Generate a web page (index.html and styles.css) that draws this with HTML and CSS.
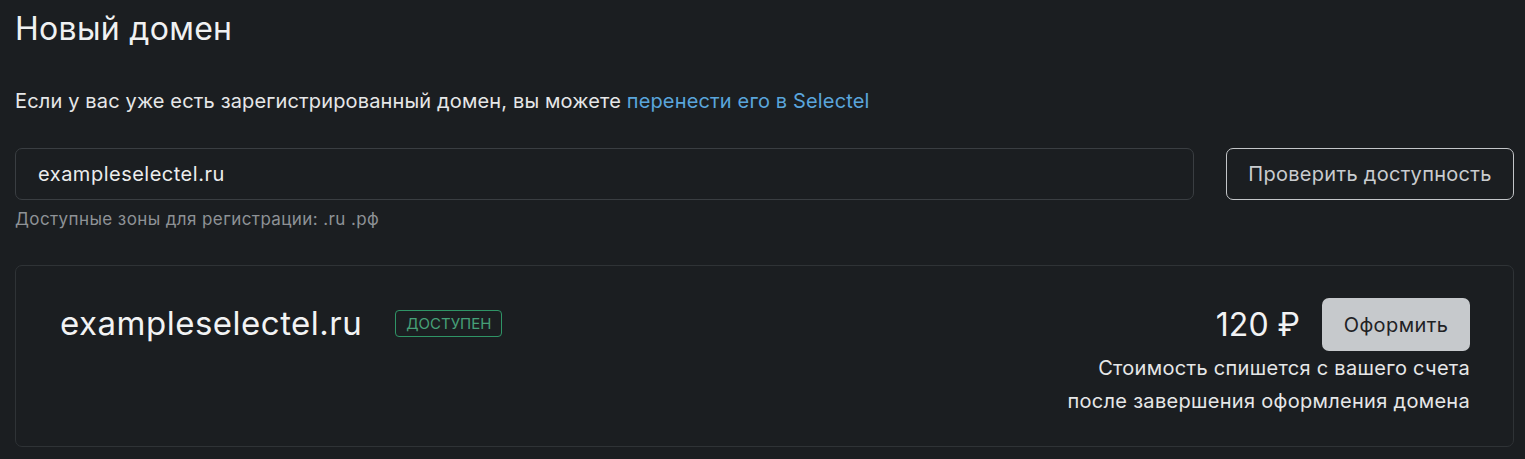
FILE: index.html
```html
<!DOCTYPE html>
<html lang="ru">
  <head>
    <meta charset="UTF-8" />
    <meta name="viewport" content="width=device-width, initial-scale=1.0" />
    <title>Новый домен</title>
    <link rel="stylesheet" href="styles.css">
  </head>
  <body>
    <div class="page">
      <h1>Новый домен</h1>
      <p class="lead">
        Если у вас уже есть зарегистрированный домен, вы можете
        <a href="#">перенести его в Selectel</a>
      </p>

      <form class="search">
        <div class="field">
          <input type="text" value="exampleselectel.ru" />
          <div class="hint">Доступные зоны для регистрации: .ru .рф</div>
        </div>
        <button type="button" class="check">Проверить доступность</button>
      </form>

      <div class="result">
        <div class="result-name">
          <span class="domain">exampleselectel.ru</span>
          <span class="badge">Доступен</span>
        </div>
        <div class="result-order">
          <div class="order-row">
            <span class="price">120 ₽</span>
            <button type="button" class="order">Оформить</button>
          </div>
          <div class="note">
            Стоимость спишется с вашего счета<br />
            после завершения оформления домена
          </div>
        </div>
      </div>
    </div>
  </body>
</html>
```

FILE: styles.css
```css
body {
  font-family: Inter, "Noto Sans", sans-serif;
  margin: 0;
  padding: 0;
  background-color: #1b1e21;
  color: #e6e7e8;
}

.page {
  padding: 10px 11px 0 15px;
}

h1 {
  margin: 0;
  font-size: 32px;
  font-weight: 400;
  line-height: 38px;
  letter-spacing: 0.3px;
  color: #f0f1f2;
}

.lead {
  margin: 40px 0 0;
  font-size: 20px;
  line-height: 26px;
  letter-spacing: 0.15px;
  color: #e6e7e8;
}

.lead a {
  color: #5aa5dc;
  text-decoration: none;
}

.search {
  display: flex;
  gap: 32px;
  margin-top: 34px;
}

.field {
  flex: 1;
}

input {
  box-sizing: border-box;
  width: 100%;
  height: 52px;
  padding: 0 22px;
  border: 1px solid #3a3e42;
  border-radius: 7px;
  background-color: #1b1e21;
  color: #eceded;
  font-family: inherit;
  font-size: 20px;
  letter-spacing: 0.5px;
  outline: none;
}

.hint {
  margin-top: 9px;
  font-size: 17px;
  letter-spacing: 0.4px;
  color: #8e9296;
}

.check {
  box-sizing: border-box;
  width: 288px;
  height: 52px;
  border: 1.5px solid #c3c6c9;
  border-radius: 7px;
  background-color: transparent;
  color: #c9cccf;
  font-family: inherit;
  font-size: 20px;
  letter-spacing: 0.3px;
  cursor: pointer;
}

.result {
  display: flex;
  justify-content: space-between;
  margin-top: 36px;
  padding: 32px 43px 28px 44px;
  border: 1px solid #2f3336;
  border-radius: 7px;
}

.result-name {
  display: flex;
  align-items: center;
  gap: 33px;
  height: 50px;
}

.domain {
  font-size: 33px;
  letter-spacing: 0.5px;
  color: #f2f3f4;
}

.badge {
  padding: 3px 10px;
  border: 1.5px solid #2f9466;
  border-radius: 4px;
  color: #46a078;
  font-size: 15px;
  text-transform: uppercase;
}

.result-order {
  display: flex;
  flex-direction: column;
  align-items: flex-end;
}

.order-row {
  display: flex;
  align-items: center;
  gap: 22px;
}

.price {
  font-size: 32px;
  color: #f2f3f4;
}

.order {
  width: 148px;
  height: 53px;
  border: none;
  border-radius: 7px;
  background-color: #c6c9cc;
  color: #1f2225;
  font-family: inherit;
  font-size: 20px;
  letter-spacing: 0.4px;
  cursor: pointer;
}

.note {
  margin-top: 1px;
  font-size: 20px;
  line-height: 33px;
  letter-spacing: 0.3px;
  text-align: right;
  color: #e6e7e8;
}
```
